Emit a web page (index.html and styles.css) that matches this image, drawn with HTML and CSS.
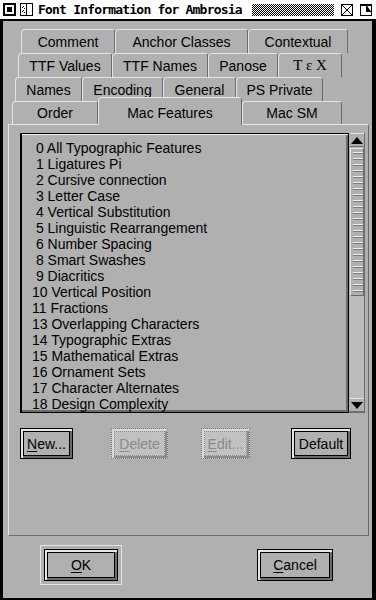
FILE: index.html
```html
<!DOCTYPE html>
<html lang="en">
<head>
  <meta charset="UTF-8">
  <meta name="viewport" content="width=device-width, initial-scale=1.0">
  <title>Font Information for Ambrosia</title>
  <link rel="stylesheet" href="styles.css">
</head>
<body>
  <div class="window">
    <div class="titlebar">
      <svg class="tb-icon" width="13" height="13" viewBox="0 0 13 13">
        <rect x="0.5" y="0.5" width="12" height="12" fill="#fff" stroke="#000"/>
        <rect x="1.5" y="1.5" width="10" height="10" fill="none" stroke="#000"/>
        <rect x="4" y="4" width="5" height="5" fill="#000"/>
      </svg>
      <svg class="tb-icon" width="13" height="13" viewBox="0 0 13 13">
        <rect x="0.5" y="0.5" width="12" height="12" fill="#fff" stroke="#000"/>
        <path d="M6.5 1v11" stroke="#000"/>
        <rect x="3" y="3" width="1" height="1"/><rect x="4" y="5" width="1" height="1"/>
        <rect x="3" y="7" width="1" height="1"/><rect x="4" y="9" width="1" height="1"/>
        <rect x="2" y="4" width="1" height="1"/><rect x="2" y="8" width="1" height="1"/>
      </svg>
      <span class="title">Font Information for Ambrosia</span>
      <span class="stipple"></span>
      <svg class="tb-icon" width="12" height="12" viewBox="0 0 12 12">
        <rect x="0.5" y="0.5" width="11" height="11" fill="#fff" stroke="#000"/>
        <path d="M1 1l10 10M11 1L1 11" stroke="#000"/>
      </svg>
      <svg class="tb-icon" width="12" height="12" viewBox="0 0 12 12">
        <rect x="0.5" y="0.5" width="11" height="11" fill="#fff" stroke="#000"/>
        <path d="M6.5 1v6.5H11M1 1.5h10" stroke="#000"/>
      </svg>
    </div>

    <div class="frame">
      <div class="tabs">
        <div class="tab-row row1">
          <div class="tab w-comment">Comment</div>
          <div class="tab w-anchor">Anchor Classes</div>
          <div class="tab w-contextual">Contextual</div>
        </div>
        <div class="tab-row row2">
          <div class="tab w-ttfvalues">TTF Values</div>
          <div class="tab w-ttfnames">TTF Names</div>
          <div class="tab w-panose">Panose</div>
          <div class="tab w-tex"><span class="tex">T ε X</span></div>
        </div>
        <div class="tab-row row3">
          <div class="tab w-names">Names</div>
          <div class="tab w-encoding">Encoding</div>
          <div class="tab w-general">General</div>
          <div class="tab w-psprivate">PS Private</div>
        </div>
        <div class="tab-row row4">
          <div class="tab w-order">Order</div>
          <div class="tab tab-active w-macfeat">Mac Features</div>
          <div class="tab w-macsm">Mac SM</div>
        </div>
      </div>

      <div class="panel">
        <div class="list-wrap">
          <div class="list">
            <div class="item"> 0 All Typographic Features</div>
            <div class="item"> 1 Ligatures Pi</div>
            <div class="item"> 2 Cursive connection</div>
            <div class="item"> 3 Letter Case</div>
            <div class="item"> 4 Vertical Substitution</div>
            <div class="item"> 5 Linguistic Rearrangement</div>
            <div class="item"> 6 Number Spacing</div>
            <div class="item"> 8 Smart Swashes</div>
            <div class="item"> 9 Diacritics</div>
            <div class="item">10 Vertical Position</div>
            <div class="item">11 Fractions</div>
            <div class="item">13 Overlapping Characters</div>
            <div class="item">14 Typographic Extras</div>
            <div class="item">15 Mathematical Extras</div>
            <div class="item">16 Ornament Sets</div>
            <div class="item">17 Character Alternates</div>
            <div class="item">18 Design Complexity</div>
          </div>
          <div class="scrollbar">
            <div class="sb-arrow">
              <svg width="12" height="7" viewBox="0 0 12 7"><polygon points="6,0 12,7 0,7" fill="#000"/></svg>
            </div>
            <div class="sb-track">
              <div class="sb-thumb"></div>
            </div>
            <div class="sb-arrow">
              <svg width="12" height="7" viewBox="0 0 12 7"><polygon points="0,0 12,0 6,7" fill="#000"/></svg>
            </div>
          </div>
        </div>

        <div class="btn-row">
          <div class="btn w-new"><span class="btn-face"><u>N</u>ew...</span></div>
          <div class="btn btn-disabled w-delete"><span class="btn-face"><u>D</u>elete</span></div>
          <div class="btn btn-disabled w-edit"><span class="btn-face"><u>E</u>dit...</span></div>
          <div class="btn w-default"><span class="btn-face">Default</span></div>
        </div>
      </div>

      <div class="bottom-row">
        <div class="default-frame">
          <div class="btn w-ok"><span class="btn-face"><u>O</u>K</span></div>
        </div>
        <div class="btn w-cancel"><span class="btn-face"><u>C</u>ancel</span></div>
      </div>
    </div>
  </div>
</body>
</html>
```

FILE: styles.css
```css
body {
  margin: 0;
  background: #b0b0b0;
  font-family: "Liberation Sans", Arial, sans-serif;
  font-size: 14px;
  color: #000;
}

.window {
  width: 376px;
  height: 600px;
  display: flex;
  flex-direction: column;
  background: #b0b0b0;
}

/* title bar */
.titlebar {
  height: 19px;
  background: #fff;
  border-bottom: 2px solid #000;
  display: flex;
  align-items: center;
  padding-left: 3px;
}

.tb-icon {
  display: block;
  flex: none;
  margin-right: 4px;
}

.title {
  font-family: "DejaVu Sans Mono", "Liberation Mono", monospace;
  font-weight: bold;
  font-size: 13px;
  letter-spacing: -0.8px;
  margin-left: 1px;
  white-space: pre;
}

.stipple {
  width: 87px;
  height: 12px;
  margin-left: 10px;
  margin-right: 7px;
  background: repeating-conic-gradient(#000 0 25%, #fff 0 50%) 0 0 / 2px 2px;
}

.titlebar .tb-icon:last-child {
  margin-left: 3px;
}

/* window body */
.frame {
  flex: 1;
  border-left: 3px solid #000;
  border-right: 4px solid #000;
  border-bottom: 2px solid #000;
  display: flex;
  flex-direction: column;
}

.tabs {
  padding-top: 8px;
}

.tab-row {
  display: flex;
  height: 24px;
}

.row1 { margin-left: 18px; }
.row2 { margin-left: 15px; }
.row3 { margin-left: 12px; }
.row4 { margin-left: 9px; height: 23px; }

.tab {
  box-sizing: border-box;
  height: 24px;
  flex: none;
  display: flex;
  align-items: center;
  justify-content: center;
  background: #b0b0b0;
  border-top: 1px solid #e4e4e4;
  border-left: 1px solid #e4e4e4;
  border-right: 1px solid #6c6c6c;
  border-top-left-radius: 4px;
  border-top-right-radius: 3px;
  white-space: nowrap;
}

.row4 .tab {
  height: 23px;
}

.row4 .tab-active {
  position: relative;
  z-index: 1;
  height: 28px;
  margin-top: -4px;
  padding-top: 2px;
}

.tex {
  font-family: "Liberation Serif", "DejaVu Serif", serif;
  font-size: 15px;
}

.w-comment { width: 94px; }
.w-anchor { width: 133px; }
.w-contextual { width: 100px; }
.w-ttfvalues { width: 94px; }
.w-ttfnames { width: 96px; }
.w-panose { width: 70px; }
.w-tex { width: 64px; }
.w-names { width: 67px; }
.w-encoding { width: 81px; }
.w-general { width: 73px; }
.w-psprivate { width: 87px; }
.w-order { width: 86px; }
.w-macfeat { width: 144px; }
.w-macsm { width: 100px; }

/* tab panel */
.panel {
  box-sizing: border-box;
  width: 361px;
  height: 412px;
  margin-left: 5px;
  border-top: 1px solid #e4e4e4;
  border-left: 1px solid #e4e4e4;
  border-right: 1px solid #6c6c6c;
  border-bottom: 1px solid #6c6c6c;
  padding: 8px 0 0 11px;
}

.list-wrap {
  display: flex;
  width: 345px;
  height: 280px;
}

.list {
  box-sizing: border-box;
  width: 329px;
  height: 280px;
  overflow: hidden;
  border-top: 1px solid #000;
  border-left: 2px solid #000;
  border-right: 1px solid #000;
  border-bottom: 1px solid #000;
  box-shadow: inset 0 1px #f0f0f0, inset -2px -2px #6c6c6c;
  padding: 6px 0 0 10px;
}

.item {
  height: 16px;
  line-height: 16px;
  white-space: pre;
}

.scrollbar {
  box-sizing: border-box;
  width: 16px;
  display: flex;
  flex-direction: column;
  border-right: 1px solid #6c6c6c;
  border-bottom: 1px solid #6c6c6c;
  padding-left: 1px;
}

.sb-arrow {
  height: 14px;
  flex: none;
  display: flex;
  align-items: center;
  justify-content: center;
  background: #b0b0b0;
  border-top: 1px solid #e4e4e4;
  border-bottom: 1px solid #6c6c6c;
  box-sizing: border-box;
}

.sb-track {
  flex: 1;
  background: #bcbcbc;
}

.sb-thumb {
  box-sizing: border-box;
  height: 148px;
  margin-top: 1px;
  border-top: 1px solid #e4e4e4;
  border-left: 1px solid #e4e4e4;
  border-right: 1px solid #6c6c6c;
  border-bottom: 1px solid #6c6c6c;
  background:
    repeating-linear-gradient(to bottom, transparent 0 3px, #ececec 3px 4px, #7c7c7c 4px 5px, transparent 5px 6px)
    2px 0 / 10px 100% no-repeat,
    #b0b0b0;
}

/* buttons */
.btn-row {
  display: flex;
  margin-top: 15px;
}

.btn-row .w-delete { margin-left: 38px; }
.btn-row .w-edit { margin-left: 33px; }
.btn-row .w-default { margin-left: 41px; }

.btn {
  box-sizing: border-box;
  height: 31px;
  border: 1px solid #000;
  box-shadow: inset 2px 2px #e6e6e6, inset -2px -2px #6c6c6c;
  padding: 2px;
  display: flex;
}

.btn-face {
  flex: 1;
  border: 1px solid #000;
  display: flex;
  align-items: center;
  justify-content: center;
  white-space: nowrap;
}

.btn u {
  text-underline-offset: 2px;
}

.btn-disabled {
  border: 1px dotted #777;
  color: #8a8a8a;
  background: repeating-conic-gradient(#c6c6c6 0 25%, #bcbcbc 0 50%) 0 0 / 2px 2px;
  box-shadow: inset 2px 2px #dadada, inset -2px -2px #8c8c8c;
}

.btn-disabled .btn-face {
  border: 1px dotted #8a8a8a;
}

.w-new { width: 53px; }
.w-delete { width: 57px; }
.w-edit { width: 49px; }
.w-default { width: 60px; }
.w-ok { width: 74px; height: 32px; }
.w-cancel { width: 76px; height: 32px; }

/* OK / Cancel */
.bottom-row {
  display: flex;
  align-items: center;
  justify-content: space-between;
  margin-top: 9px;
  padding: 0 39px 0 37px;
}

.default-frame {
  border: 1px solid #e4e4e4;
  padding: 3px;
}
```
